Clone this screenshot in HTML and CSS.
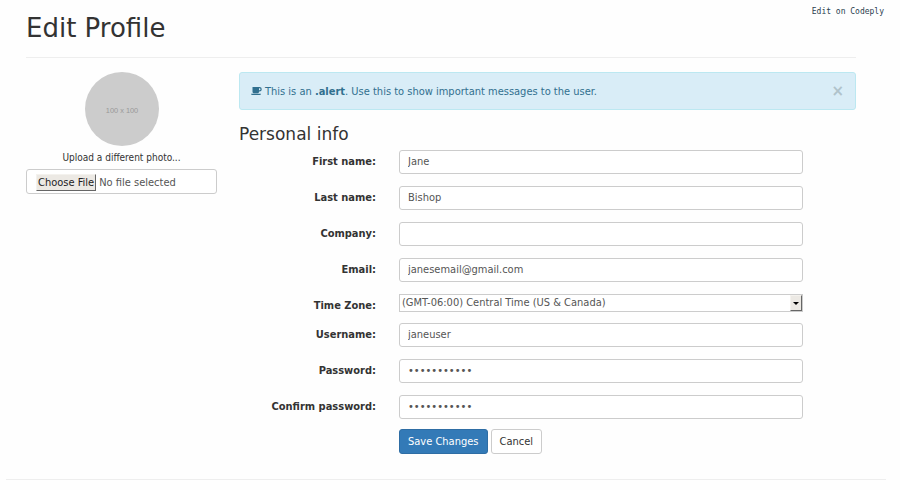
FILE: index.html
```html
<!DOCTYPE html>
<html lang="en">
<head>
<meta charset="utf-8">
<title>Edit Profile</title>
<link rel="stylesheet" href="styles.css">
</head>
<body>
<a class="codeply" href="#">Edit on Codeply</a>
<main class="container">
  <h1>Edit Profile</h1>
  <hr>
  <div class="columns">
    <aside class="photo">
      <svg class="avatar" viewBox="0 0 100 100" role="img" aria-label="avatar">
        <circle cx="50" cy="50" r="50" fill="#ccc"/>
        <text x="50" y="56" text-anchor="middle">100 x 100</text>
      </svg>
      <h6>Upload a different photo...</h6>
      <label class="file">
        <input type="file" aria-label="Choose File">
        <span class="file-button">Choose File</span>
        <span>No file selected</span>
      </label>
    </aside>
    <section>
      <div class="alert" role="alert">
        <svg class="coffee" viewBox="0 0 22 16" aria-hidden="true">
          <path fill="currentColor" fill-rule="evenodd" d="M3 0h14a4.500 4.500 0 0 1 0 9h-1v.5a3 3 0 0 1-3 3H6a3 3 0 0 1-3-3zM16 2.500v4h1a2 2 0 0 0 0-4zM0 13.500h20q0 2.500-3 2.500H3q-3 0-3-2.500z"/>
        </svg>
        <p>This is an <strong>.alert</strong>. Use this to show important messages to the user.</p>
        <button class="close" type="button" aria-label="Close">×</button>
      </div>
      <h3>Personal info</h3>
      <form class="form">
        <label for="first">First name:</label>
        <input class="control" id="first" type="text" value="Jane">
        <label for="last">Last name:</label>
        <input class="control" id="last" type="text" value="Bishop">
        <label for="company">Company:</label>
        <input class="control" id="company" type="text">
        <label for="email">Email:</label>
        <input class="control" id="email" type="text" value="janesemail@gmail.com">
        <label for="zone">Time Zone:</label>
        <div class="select">
          <select id="zone"><option>(GMT-06:00) Central Time (US &amp; Canada)</option></select>
          <span class="arrow"></span>
        </div>
        <label for="user">Username:</label>
        <input class="control" id="user" type="text" value="janeuser">
        <label for="pass">Password:</label>
        <input class="control" id="pass" type="password" value="11111122333">
        <label for="confirm">Confirm password:</label>
        <input class="control" id="confirm" type="password" value="11111122333">
        <div class="actions">
          <button class="btn primary" type="button">Save Changes</button>
          <button class="btn" type="reset">Cancel</button>
        </div>
      </form>
    </section>
  </div>
</main>
<hr class="end">
</body>
</html>
```
FILE: styles.css
```css
* { box-sizing: border-box; }
body {
  margin: 0;
  background: #fefefe;
  color: #333;
  font: 11px/15px "DejaVu Sans Condensed", "DejaVu Sans", sans-serif;
}
h1, h3, h6, p { margin: 0; font-weight: 400; }
h1, h3 { font-family: "DejaVu Sans", sans-serif; }
hr { margin: 0; border: 0; border-top: 1px solid #eee; }
.codeply {
  position: absolute;
  top: 4px;
  right: 16px;
  color: #2c3e50;
  font: 8px/16px "DejaVu Sans Mono", monospace;
  text-decoration: none;
}
.container { margin: 0 44px 0 26px; padding-top: 11px; }
h1 { font-size: 26px; line-height: 34px; padding-bottom: 12px; }
.columns {
  display: grid;
  grid-template-columns: 191fr 617fr;
  gap: 22px;
  padding-top: 14px;
}
.photo { text-align: center; }
.avatar { display: block; width: 74px; height: 74px; margin: 0 auto; }
.avatar text { fill: #999; font: 10px "Liberation Sans", sans-serif; }
h6 { font-size: 10px; line-height: 15px; padding: 4px 0; }
.file {
  position: relative;
  display: flex;
  align-items: center;
  gap: 3px;
  height: 25px;
  padding: 2px 9px 0;
  border: 1px solid #ccc;
  border-radius: 3px;
  color: #555;
  background: #fff;
}
.file input { position: absolute; inset: 0; width: 100%; height: 100%; opacity: 0; }
.file-button {
  padding: 0 1px;
  background: #ece9e4;
  color: #222;
  border: 1px solid;
  border-color: #f4f2ee #666 #666 #f4f2ee;
}
.alert {
  display: flex;
  align-items: center;
  gap: 3px;
  height: 38px;
  padding: 0 11px;
  border: 1px solid #bce8f1;
  border-radius: 3px;
  background: #d9edf7;
  color: #31708f;
}
.coffee { width: 11px; height: 8px; }
.close {
  margin-left: auto;
  padding: 0;
  border: 0;
  background: none;
  color: #b0c3cb;
  font: bold 15px/16px "DejaVu Sans", sans-serif;
}
h3 { font-size: 17px; line-height: 22px; padding: 13px 0 5px; }
.form {
  display: grid;
  grid-template-columns: 137fr 404fr 53fr;
  column-gap: 23px;
  row-gap: 12px;
  margin-right: -23px;
}
.form label { grid-column: 1; text-align: right; font-weight: 700; padding-top: 4px; height: 17px; }
.control, .select, .actions { grid-column: 2; }
.control {
  width: 100%;
  height: 24px;
  padding: 0 8px 1px;
  border: 1px solid #ccc;
  border-radius: 3px;
  background: #fff;
  color: #555;
  font: inherit;
}
.select { position: relative; height: 17px; }
.select select {
  display: block;
  width: 100%;
  height: 18px;
  padding: 0 2px 2px;
  border: 1px solid #ccc;
  border-radius: 0;
  appearance: none;
  background: #fff;
  color: #555;
  font: inherit;
}
.arrow {
  position: absolute;
  top: 1px;
  right: 1px;
  width: 12px;
  height: 16px;
  display: grid;
  place-items: center;
  background: #ece9e4;
  border: 1px solid;
  border-color: #f4f2ee #666 #666 #f4f2ee;
  pointer-events: none;
}
.arrow::before { content: ""; border: 3px solid transparent; border-top-color: #000; border-bottom: 0; }
.actions { display: flex; gap: 3px; margin-top: -2px; }
.btn {
  height: 25px;
  padding: 0 8px;
  border: 1px solid #ccc;
  border-radius: 3px;
  background: #fff;
  color: #333;
  font: inherit;
}
.primary { background: #337ab7; border-color: #2e6da4; color: #fff; }
.end { margin: 25px 14px 10px 6px; }
```
